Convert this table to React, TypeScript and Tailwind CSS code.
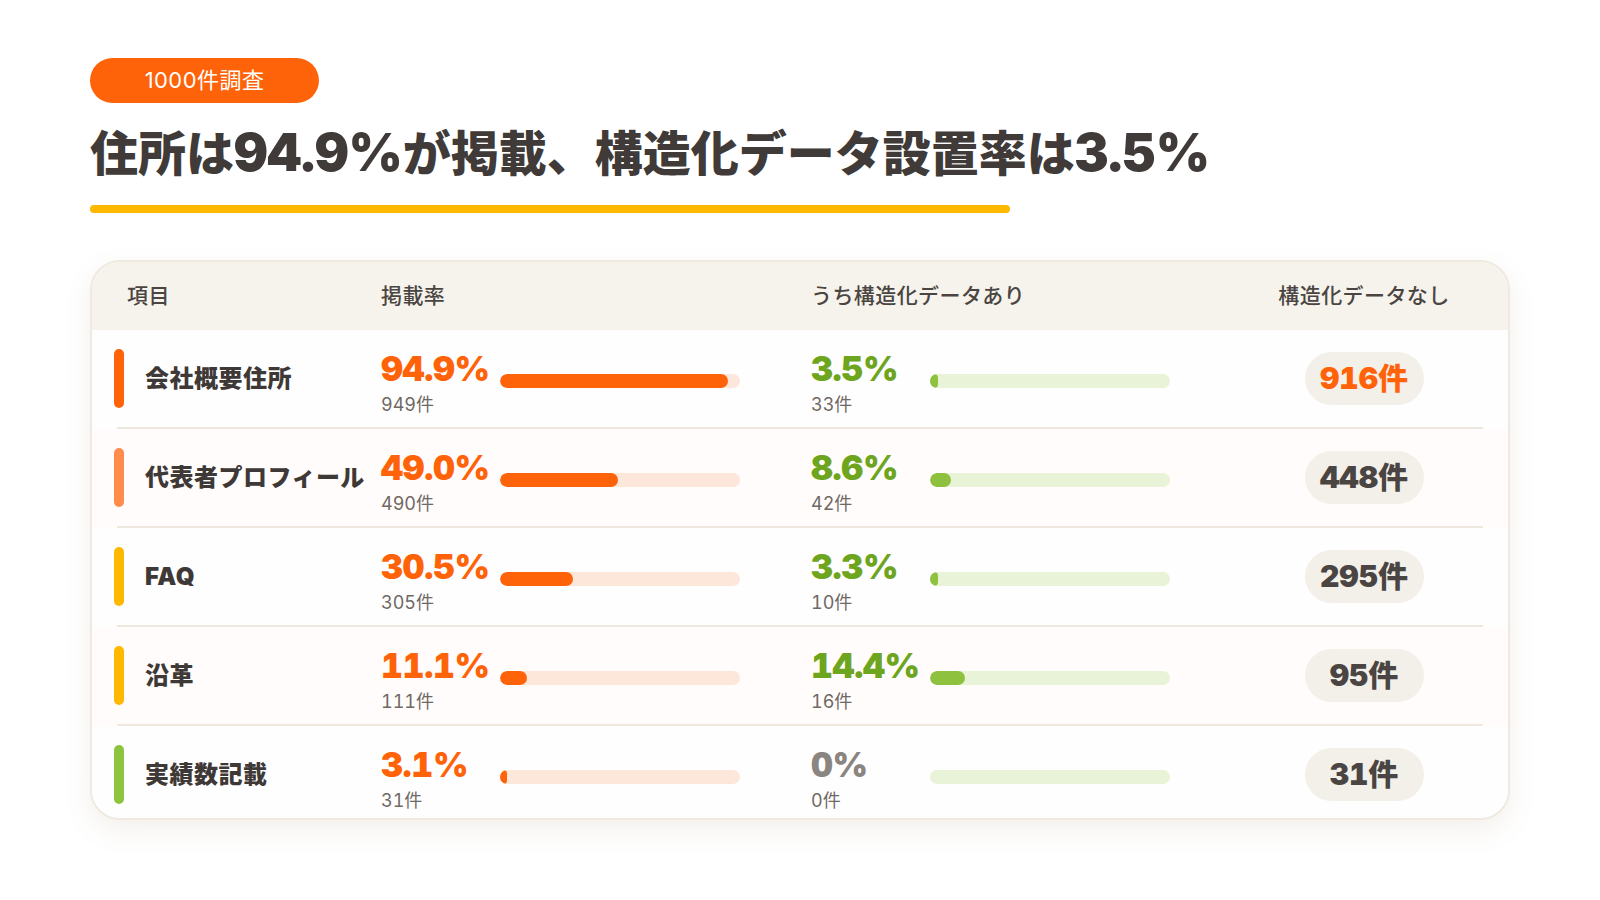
import React from "react";

const FONT = { fontFamily: 'Inter, "Noto Sans CJK JP", sans-serif' };

type Row = {
  label: string;
  accent: string;
  pct: number;
  count: number;
  spct: number;
  scount: number;
  none: number;
  highlight?: boolean;
};

const rows: Row[] = [
  { label: "会社概要住所", accent: "bg-[#FF6309]", pct: 94.9, count: 949, spct: 3.5, scount: 33, none: 916, highlight: true },
  { label: "代表者プロフィール", accent: "bg-[#FF8C4B]", pct: 49.0, count: 490, spct: 8.6, scount: 42, none: 448 },
  { label: "FAQ", accent: "bg-[#FFB800]", pct: 30.5, count: 305, spct: 3.3, scount: 10, none: 295 },
  { label: "沿革", accent: "bg-[#FFB800]", pct: 11.1, count: 111, spct: 14.4, scount: 16, none: 95 },
  { label: "実績数記載", accent: "bg-[#8CC43F]", pct: 3.1, count: 31, spct: 0, scount: 0, none: 31 },
];

function fmt(v: number) {
  if (v === 0) return "0%";
  return v.toFixed(1) + "%";
}

function Metric({ value, count, kind }: { value: number; count: number; kind: "orange" | "green" }) {
  const pctColor =
    kind === "orange" ? "text-[#FF6309]" : value === 0 ? "text-[#8A8580]" : "text-[#6EA51E]";
  const track = kind === "orange" ? "bg-[#FDE7DA]" : "bg-[#E8F3D7]";
  const fill = kind === "orange" ? "bg-[#FF6309]" : "bg-[#8DC13E]";
  return (
    <div className="flex items-center gap-[10px]">
      <div className="w-[109px] flex flex-col pt-[8px]">
        <div className={`text-[34px] leading-none font-black tabular-nums tracking-[-0.01em] whitespace-nowrap ${pctColor}`}>{fmt(value)}</div>
        <div className="mt-[10px] text-[18px] leading-none tabular-nums text-[#6E6964]">{count}件</div>
      </div>
      <div className={`w-[240px] h-[14px] mt-[5px] rounded-full ${track} overflow-hidden`}>
        {value > 0 && (
          <div className={`h-full rounded-full ${fill}`} style={{ width: `${value}%` }} />
        )}
      </div>
    </div>
  );
}

export default function App() {
  return (
    <div className="w-[1600px] h-[900px] bg-white text-[#3E3936] overflow-hidden" style={FONT}>
      <div className="pt-[58px] pl-[90px]">
        <div className="w-[229px] h-[45px] rounded-full bg-[#FF6309] flex items-center justify-center text-white text-[22px] tracking-[0.02em]">
          1000件調査
        </div>
        <h1 className="mt-[24px] h-[52px] flex items-center text-[48px] leading-none font-black text-[#403B38] whitespace-nowrap">
          <span>住所は<span className="text-[52px] tabular-nums">94.9%</span>が掲載、構造化データ設置率は<span className="text-[52px] tabular-nums">3.5%</span></span>
        </h1>
        <div className="mt-[26px] w-[920px] h-[8px] rounded-full bg-[#FFB800]" />

        <div className="mt-[47px] w-[1420px] h-[560px] rounded-[30px] border-2 border-[#EFE9DF] bg-[#FFFEFE] overflow-hidden shadow-[0_10px_28px_rgba(140,110,70,0.10)]">
          <div className="h-[68px] bg-[#F6F3EC]">
            <div className="mx-[25px] h-full grid grid-cols-[264px_430px_434px_1fr] items-center text-[21px] font-medium text-[#4A4542] tracking-[0.02em]">
              <div className="pl-[10px]">項目</div>
              <div>掲載率</div>
              <div>うち構造化データあり</div>
              <div className="text-center">構造化データなし</div>
            </div>
          </div>
          {rows.map((r, i) => (
            <div key={r.label} className={i % 2 === 1 ? "bg-[#FFFCFB]" : "bg-[#FFFEFE]"}>
              <div className="mx-[25px] h-[99px] border-b-2 border-[#EEE8DF] grid grid-cols-[264px_430px_434px_1fr] items-center">
                <div className="flex items-center">
                  <div className={`-ml-[3px] w-[10px] h-[59px] rounded-full ${r.accent}`} />
                  <div className="ml-[21px] text-[24px] font-black text-[#3E3936] tracking-[0.02em] whitespace-nowrap">
                    {r.label}
                  </div>
                </div>
                <Metric value={r.pct} count={r.count} kind="orange" />
                <Metric value={r.spct} count={r.scount} kind="green" />
                <div className="flex justify-center">
                  <div
                    className={`w-[119px] h-[53px] rounded-full bg-[#F3F0EA] flex items-center justify-center text-[30px] font-black tabular-nums ${
                      r.highlight ? "text-[#FF6309]" : "text-[#4A4542]"
                    }`}
                  >
                    {r.none}件
                  </div>
                </div>
              </div>
            </div>
          ))}
        </div>
      </div>
    </div>
  );
}
